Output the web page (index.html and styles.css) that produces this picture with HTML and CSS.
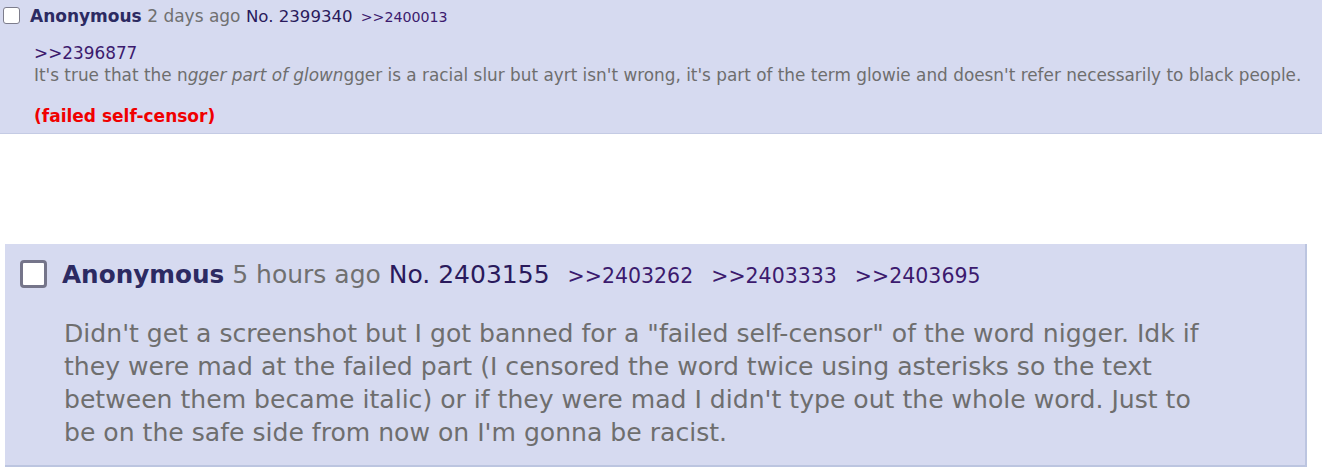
FILE: index.html
```html
<!DOCTYPE html>
<html>
<head>
<meta charset="utf-8">
<link rel="stylesheet" href="styles.css">
</head>
<body>
<div class="post post-small">
  <div class="post-info">
    <span class="check"></span><span class="name">Anonymous</span> <span class="date">2 days ago</span> <span class="postnum">No. 2399340</span><span class="backlinks"><a class="backlink">&gt;&gt;2400013</a></span>
  </div>
  <blockquote class="message">
    <a class="quotelink">&gt;&gt;2396877</a><br>
    It's true that the n<em>gger part of glown</em>gger is a racial slur but ayrt isn't wrong, it's part of the term glowie and doesn't refer necessarily to black people.
    <span class="mod-note">(failed self-censor)</span>
  </blockquote>
</div>

<div class="post post-large">
  <div class="post-info">
    <span class="check"></span><span class="name">Anonymous</span> <span class="date">5 hours ago</span> <span class="postnum">No. 2403155</span><span class="backlinks"><a class="backlink">&gt;&gt;2403262</a><a class="backlink">&gt;&gt;2403333</a><a class="backlink">&gt;&gt;2403695</a></span>
  </div>
  <blockquote class="message">Didn't get a screenshot but I got banned for a "failed self-censor" of the word nigger. Idk if they were mad at the failed part (I censored the word twice using asterisks so the text between them became italic) or if they were mad I didn't type out the whole word. Just to be on the safe side from now on I'm gonna be racist.</blockquote>
</div>
</body>
</html>
```

FILE: styles.css
```css
html, body {
  margin: 0;
  padding: 0;
  background: #ffffff;
}

body {
  font-family: "DejaVu Sans", Verdana, sans-serif;
  color: #6e6e6e;
}

.post {
  background: #d6daf0;
  box-sizing: border-box;
}

.post-info {
  white-space: nowrap;
}

.check {
  display: inline-block;
  box-sizing: border-box;
  background: #ffffff;
  vertical-align: middle;
}

.name {
  font-weight: bold;
  color: #2c2a62;
}

.date {
  color: #707070;
}

.postnum {
  color: #2a1a5c;
}

.backlink {
  color: #3c1a6e;
  text-decoration: none;
}

.message {
  margin: 0;
  color: #6e6e6e;
}

.quotelink {
  color: #3c1a6e;
  text-decoration: none;
}

.message em {
  font-style: italic;
}

.mod-note {
  display: block;
  color: #f00000;
  font-weight: bold;
}

/* small (top) post */
.post-small {
  width: 1322px;
  font-size: 17px;
  line-height: 22px;
  padding: 5px 0 6px 3px;
  border-bottom: 1px solid #c4cbe4;
}

.post-small .postnum {
  font-size: 16.6px;
}

.post-small .backlink {
  font-size: 14.2px;
  margin-left: 8px;
}

.post-small .check {
  width: 17px;
  height: 17px;
  border: 1px solid #7d7d8c;
  border-radius: 3px;
  margin-right: 10px;
  margin-top: -3px;
}

.post-small .message {
  margin: 14px 0 0 31px;
  font-size: 16.86px;
}

.post-small .mod-note {
  margin-top: 19px;
  font-size: 17px;
}

/* large (bottom) post */
.post-large {
  width: 1302px;
  margin: 110px 0 0 5px;
  font-size: 25px;
  line-height: 33px;
  padding: 14px 0 16px 15px;
  border-right: 2px solid #bcc5e0;
  border-bottom: 2px solid #bcc5e0;
}

.post-large .name {
  font-size: 24.7px;
}

.post-large .backlink {
  font-size: 20.5px;
  margin-left: 18px;
}

.post-large .check {
  width: 27px;
  height: 28px;
  border: 3px solid #75758a;
  border-radius: 4px;
  margin-right: 15px;
  margin-top: -4px;
}

.post-large .message {
  margin: 24px 0 0 44px;
  width: 1150px;
  font-size: 25.1px;
}
```
